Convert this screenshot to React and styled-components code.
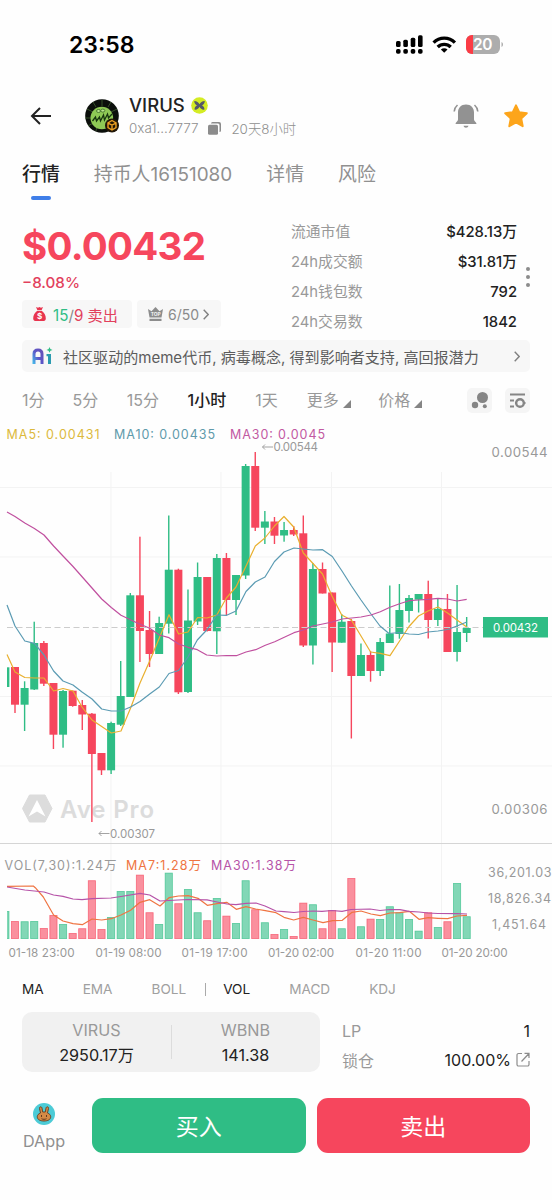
import React, { useState } from 'react';
import styled, { createGlobalStyle } from 'styled-components';

const GREEN = '#2fbd85';
const RED = '#f6465d';
const FONT = 'Inter, "Noto Sans CJK SC", sans-serif';

const GlobalStyle = createGlobalStyle`
  * {
    box-sizing: border-box;
  }
  body {
    margin: 0;
    background: #fefefe;
    font-family: ${FONT};
    color: #222;
  }
  button {
    font-family: inherit;
    border: none;
    background: none;
    padding: 0;
  }
  svg {
    flex: none;
  }
`;

const Screen = styled.div`
  width: 552px;
  height: 1200px;
  overflow: hidden;
  display: flex;
  flex-direction: column;
  white-space: nowrap;
`;

const StatusBar = styled.div`
  display: flex;
  align-items: center;
  height: 90px;
  padding: 0 49px 0 69px;
`;

const Clock = styled.span`
  flex: 1;
  font-size: 23px;
  font-weight: 600;
  color: #000;
`;

const Header = styled.header`
  display: flex;
  align-items: center;
  height: 51px;
  padding: 0 23px 0 30px;
`;

const TokenInfo = styled.div`
  flex: 1;
  margin-left: 9px;
  padding-top: 2px;
`;

const TokenName = styled.div`
  display: flex;
  align-items: center;
  gap: 6px;
  height: 23px;
  font-size: 18.5px;
  font-weight: 500;
`;

const TokenMeta = styled.div`
  display: flex;
  align-items: center;
  height: 23px;
  font-size: 13.4px;
  font-weight: 300;
  color: #8f8f8f;
  svg {
    margin: 0 10px;
  }
`;

const Tabs = styled.nav`
  display: flex;
  height: 67px;
  padding: 20px 22px 0;
`;

const Tab = styled.button`
  display: flex;
  flex-direction: column;
  align-items: center;
  height: 42px;
  margin-right: 34px;
  font-size: 18.9px;
  line-height: 28px;
  font-weight: ${props => (props.$active ? 500 : 400)};
  color: ${props => (props.$active ? '#222' : '#909090')};
  &::after {
    content: '';
    width: 20px;
    height: 4px;
    margin-top: 7px;
    border-radius: 2px;
    background: ${props => (props.$active ? '#3f7ee8' : 'transparent')};
  }
`;

const Overview = styled.section`
  display: flex;
  justify-content: space-between;
  height: 132px;
  padding: 8px 22px 0 22px;
`;

const Price = styled.div`
  height: 60px;
  line-height: 60px;
  font-size: 38.5px;
  font-weight: 700;
  letter-spacing: -0.7px;
  color: ${RED};
`;

const Change = styled.div`
  height: 13px;
  line-height: 13px;
  font-size: 15.2px;
  font-weight: 500;
  color: #e2405c;
`;

const Pills = styled.div`
  display: flex;
  gap: 5px;
  margin-top: 11px;
`;

const Pill = styled.div`
  display: flex;
  align-items: center;
  height: 28px;
  width: ${props => props.$width}px;
  padding-left: 11px;
  border-radius: 4px;
  background: #f7f7f7;
  font-size: ${props => props.$size}px;
  color: #8a8a8a;
  svg:first-child {
    margin-right: ${props => props.$gap}px;
  }
`;

const Up = styled.span`
  color: ${GREEN};
`;

const Down = styled.span`
  color: #e2405c;
`;

const StatsWrap = styled.div`
  display: flex;
  align-items: center;
`;

const Stats = styled.div`
  width: 226px;
  margin-top: -2px;
`;

const Stat = styled.div`
  display: flex;
  justify-content: space-between;
  height: 30.2px;
  line-height: 30px;
  font-size: 14.8px;
  color: #999;
  b {
    font-weight: 500;
    color: #222;
  }
`;

const Dots = styled.div`
  display: flex;
  flex-direction: column;
  gap: 4px;
  margin: -2px 0 0 9px;
  i {
    width: 4px;
    height: 4px;
    border-radius: 2px;
    background: #8c8c8c;
  }
`;

const AiBar = styled.div`
  display: flex;
  align-items: center;
  height: 32px;
  margin: 0 22px;
  padding: 0 10px;
  border-radius: 5px;
  background: #f7f7f7;
  font-size: 15.05px;
  color: #5c5c5c;
  p {
    flex: 1;
    margin: 0 0 0 10px;
  }
`;

const Intervals = styled.div`
  display: flex;
  align-items: center;
  height: 56px;
  padding: 0 22px;
`;

const Interval = styled.button`
  display: flex;
  align-items: center;
  margin-top: -2px;
  margin-right: ${props => props.$gap}px;
  font-size: 16px;
  font-weight: ${props => (props.$active ? 500 : 400)};
  color: ${props => (props.$active ? '#222' : '#999')};
  svg {
    margin: 9px 0 0 4px;
  }
`;

const Tools = styled.div`
  display: flex;
  gap: 13px;
  margin-left: auto;
`;

const ToolButton = styled.button`
  display: flex;
  width: 25px;
  height: 25px;
  border-radius: 5px;
  background: #f5f5f5;
`;

const Chart = styled.svg`
  display: block;
  flex: none;
  font-family: ${FONT};
`;

const Indicators = styled.div`
  display: flex;
  align-items: center;
  height: 48px;
  padding: 2px 22px 0;
`;

const Indicator = styled.button`
  margin-right: ${props => props.$gap}px;
  font-size: 13.6px;
  font-weight: 400;
  color: ${props => (props.$active ? '#222' : '#a0a0a0')};
`;

const Bar = styled.i`
  width: 1px;
  height: 13px;
  margin-right: 17px;
  background: #aaa;
`;

const Pool = styled.section`
  display: flex;
  height: 60px;
  padding: 0 22px;
`;

const Reserves = styled.div`
  display: flex;
  align-items: center;
  width: 298px;
  border-radius: 10px;
  background: #f1f1f1;
`;

const Reserve = styled.div`
  flex: 1;
  padding-top: 1px;
  text-align: center;
  font-size: 16.2px;
  line-height: 25px;
  color: #999;
  b {
    display: block;
    font-weight: 400;
    color: #222;
  }
  & + & {
    background: linear-gradient(#dcdcdc, #dcdcdc) no-repeat left center / 1px 34px;
  }
`;

const Locks = styled.div`
  flex: 1;
  padding: 5px 0 0 22px;
`;

const Lock = styled.div`
  display: flex;
  align-items: center;
  height: 28.5px;
  font-size: 16px;
  color: #999;
  b {
    flex: 1;
    text-align: right;
    font-weight: 400;
    color: #222;
  }
  svg {
    margin-left: 5px;
  }
`;

const Actions = styled.footer`
  display: flex;
  height: 55px;
  margin-top: 26px;
  padding: 0 22px;
`;

const DApp = styled.div`
  display: flex;
  flex-direction: column;
  align-items: center;
  width: 44px;
  margin-right: 26px;
  padding-top: 5px;
  font-size: 16.2px;
  line-height: 32px;
  color: #8f8f8f;
`;

const TradeButton = styled.button`
  flex: 1;
  margin-left: ${props => props.$gap || 0}px;
  padding-bottom: 2px;
  border-radius: 11px;
  background: ${props => props.$color};
  color: #fff;
  font-size: 23px;
  font-weight: 400;
`;

// [high, top, bottom, low, rising, volume top]
const candles = [
  [667, 667.3, 687, 687, 1, 911],
  [667, 667, 704.7, 713, 0, 921],
  [681.3, 688, 704.7, 731, 1, 921.3],
  [621.7, 643, 689.5, 690, 1, 921],
  [641, 643, 683.7, 686, 0, 928],
  [683, 683, 734.7, 749, 0, 915],
  [690, 691, 734.7, 747.7, 1, 924],
  [690.7, 690.7, 706, 706.7, 0, 933],
  [700, 705, 714.5, 730, 0, 928.3],
  [713, 713.7, 754, 822, 0, 880.3],
  [753, 753, 770.3, 775, 0, 929],
  [721.7, 723, 770.3, 774, 1, 917],
  [661, 696, 724.7, 726, 1, 891],
  [593, 595.3, 697, 697, 1, 891],
  [536.7, 595.3, 631, 662, 0, 874.7],
  [611, 630, 654, 667, 0, 912.3],
  [616.7, 623, 654, 654, 1, 924],
  [515.5, 569.7, 623.7, 633.5, 1, 872.7],
  [568.7, 569.7, 692.3, 694, 0, 903.3],
  [589.5, 620.5, 692, 693, 1, 889],
  [562.5, 577, 621.5, 625, 1, 912.3],
  [577, 577, 631, 631.5, 0, 920.3],
  [554, 558, 631.3, 654, 1, 898],
  [553, 558, 600, 615, 0, 915.7],
  [575, 575, 600, 615, 1, 923],
  [464, 466, 575.5, 579, 1, 880.3],
  [452, 466, 527.7, 531, 0, 909.3],
  [511, 521.5, 527.7, 544, 1, 922.3],
  [517, 521.5, 535.7, 544, 0, 934],
  [522, 530, 535.5, 541.7, 1, 929],
  [526, 530, 534.5, 536, 0, 936],
  [515.5, 533.3, 645.5, 647, 0, 902.7],
  [563, 569, 645.5, 664.5, 1, 904.3],
  [562.5, 569, 593.5, 593.5, 0, 928.3],
  [592.5, 592.5, 642.5, 672, 0, 910],
  [614, 621.7, 642.7, 642.7, 1, 928.3],
  [619, 621, 676, 738.5, 0, 878],
  [643.5, 655, 676, 676, 1, 926.3],
  [651, 655, 671, 681.7, 0, 918.7],
  [638, 642, 671, 676, 1, 919],
  [585.5, 633.5, 643, 643, 1, 906.3],
  [584, 610, 634, 638.7, 1, 912.3],
  [595, 598, 611, 622.5, 1, 919],
  [594, 594, 599.7, 612.5, 1, 930.7],
  [580.7, 594, 620, 638.5, 0, 912.3],
  [599, 609, 620, 626, 1, 927],
  [594, 609, 652, 652, 0, 921.3],
  [585, 632, 652, 661.5, 1, 883],
  [617, 628, 633, 642, 1, 916.3],
];

const lines = {
  ma5: '7,654.5 15,672 24.8,677.5 34.4,678 44,678 53.6,691 63,688.5 73,691 82,707 92,720 101.7,726.5 111.3,733 121,731 130.6,708 140,683 149.7,661 159.3,638 169,614.7 178.6,634 188,632 197.6,617.5 207,618 216.8,615 226.4,598 236,587 245.6,567 255.3,546 264.9,538 274.5,526 284,516.5 293.7,527 303.3,553 313,563.5 322.5,574 332,596 341.7,615 351.4,620 361,636 370.6,652 380.3,653.3 390,655.7 399.6,641 409,626.5 418.5,616 428,611 438,607 447.6,613 457,620 466.7,627',
  ma10: '7,605 15,626 24.8,641 34.4,643.3 44,655 53.6,671 63,681 73,685 82,692 92,699 101.7,709 111.3,711 121,711 130.6,707 140,701.5 149.7,694 159.3,687 169,673.5 178.6,670.5 188,657 197.3,640 206.7,630 216.7,615 226.7,615.3 236,611 246,591.5 255.3,582 265,577 274.5,561.5 284,552 294,548 303,549 313,550 322.6,549.7 332.3,556.5 342,571 351.5,586 361,600 371,614 380,626 389,633.5 399.6,632.5 409,634 418.5,634.5 428,632 438,631 447.5,629.5 457,626 466.7,622',
  ma30: '7,512 15,516.5 24.8,523 34.4,528.5 44,535 53.6,546 63,556 73,566.5 82.3,577 92,588 101.7,599 111.3,607.5 121,615.3 136.7,622.7 149.7,628.3 159.3,635 169,637.7 178.6,644 188,647.3 197.3,649.7 206.7,655 216.7,656 226.7,655.5 236.3,655.7 246,652 255.7,649.7 265.3,645.3 274.7,641.7 284.3,637.3 294,632.7 303.3,630 313,626 322.7,624 332.3,622 342,619 351.7,618 361,617 371,615 380.3,611.7 390,607.3 399.6,603.7 409,600.7 418.7,600 428,599.3 438,598.3 447.6,599 457,601 466.7,599.3',
  vol7: '7,886.3 33.3,886 35.3,887.7 43.3,897 53.6,915 63,921 73,923.7 82.3,924.7 92,919 101.7,920 111.3,918.7 121,915 130.6,910.3 140,902.3 149.7,899.7 160,906 169,897.7 178.6,896 188.3,895.7 198,898.3 207.3,905.3 217,903.7 226.7,902.3 236.3,909.3 246,906.7 255.7,909 265.3,910.7 276,912.7 284,917.3 293.7,920 303.3,917.3 313,920 323,922.7 332.7,920.7 342.3,920.3 352,912.3 361,911 371,914 380.3,915.7 390,913 399.7,912.7 409.3,911.3 419,919.3 428.3,917.7 438,918.3 447.7,918.7 457,916 467,915.3',
  vol30: '7,887 24.8,890 44,892 53.6,895 63,896.3 73,899 82,899.7 92,898.7 111,898 121,896.5 140,893.3 149.7,895 160,901 178,900 188,899.5 207,899.8 217,902 227,904 236,904.7 246,903.3 256,903 265,906 276,911 284,911.7 294,912.5 303,911.5 313,911 322,911.3 332,910.5 342,911.3 351,909.5 370,909 380,910.5 390,909.5 400,909.7 409,911.3 419,912 428,913 438,913.5 457,913.7 467,914',
};

const times = [
  [8.5, '01-18 23:00'],
  [95.5, '01-19 08:00'],
  [181.5, '01-19 17:00'],
  [268, '01-20 02:00'],
  [355.5, '01-20 11:00'],
  [441.5, '01-20 20:00'],
];

const Label = ({ x, y, w, size = 12.5, color = '#999', children }) => (
  <text x={x} y={y} textLength={w} fontSize={size} fill={color}>
    {children}
  </text>
);

const Kline = () => (
  <Chart width="552" height="536" viewBox="0 428 552 536">
    <defs>
      <clipPath id="plot">
        <rect x="7" y="428" width="540" height="520" />
      </clipPath>
    </defs>
    {[487.5, 557, 696.5, 766].map(y => (
      <path key={y} d={`M0 ${y}H552`} stroke="#f3f3f3" />
    ))}
    {[111, 221, 331.5, 441.5].map(x => (
      <path key={x} d={`M${x} 472V939`} stroke="#f3f3f3" />
    ))}
    <path d="M0 843.5H552" stroke="#d5d5d5" />
    <g fill="#dcdcdc">
      <path d="M29.5 795h15.5l7 13.500-7 13.500H29.5l-7-13.500z" stroke="#dcdcdc" strokeLinejoin="round" />
      <path d="M37 800l8.5 16.5-8.5-5-8.5 5z" fill="#fff" />
      <text x="60" y="817.5" fontSize="24" fontWeight="600" textLength="94">Ave Pro</text>
    </g>
    <g clipPath="url(#plot)">
      {candles.map(([high, top, bottom, low, rising, vol], i) => {
        const x = 15 + (i - 1) * 9.61;
        const color = rising ? GREEN : RED;
        return (
          <g key={i} fill={color}>
            <rect x={x - 4} y={top} width="8" height={bottom - top} />
            <rect x={x - 0.7} y={high} width="1.4" height={low - high} />
            <rect x={x - 3.6} y={vol + 0.4} width="7.2" height={938.2 - vol} fillOpacity="0.6" stroke={color} strokeOpacity="0.7" strokeWidth="0.8" />
          </g>
        );
      })}
    </g>
    <path d="M7 627.5H483" stroke="#ccc" strokeWidth="1.2" strokeDasharray="6 3.5" />
    <g fill="none" strokeWidth="1.2" strokeLinejoin="round">
      <polyline points={lines.ma5} stroke="#e9b02f" />
      <polyline points={lines.ma10} stroke="#5b9bb3" />
      <polyline points={lines.ma30} stroke="#c0509f" />
      <polyline points={lines.vol7} stroke="#ef7442" />
      <polyline points={lines.vol30} stroke="#b653a8" />
    </g>
    <Label x={6.5} y={439} w={93} color="#dcb93c">MA5: 0.00431</Label>
    <Label x={114} y={439} w={101} color="#5f9aab">MA10: 0.00435</Label>
    <Label x={230} y={439} w={95} color="#c259a2">MA30: 0.0045</Label>
    <Label x={273.5} y={451} w={44.500} size={11.5}>0.00544</Label>
    <Label x={110} y={837.5} w={45} size={11.5}>0.00307</Label>
    <path d="M273 447H262.500M265 444.500l-2.500 2.500 2.500 2.500M109.500 833.500H99M101.500 831l-2.500 2.500 2.500 2.500" fill="none" stroke="#999" strokeWidth="0.9" />
    <Label x={491.5} y={457} w={56} size={13.2}>0.00544</Label>
    <Label x={491.5} y={813.5} w={56} size={13.2}>0.00306</Label>
    <rect x="483" y="617" width="65" height="20.500" fill={GREEN} />
    <Label x={493} y={631.5} w={45} size={11.5} color="#fff">0.00432</Label>
    <Label x={4.500} y={870} w={112}>VOL(7,30):1.24万</Label>
    <Label x={126} y={870} w={75} color="#ef7442">MA7:1.28万</Label>
    <Label x={211} y={870} w={85} color="#b653a8">MA30:1.38万</Label>
    <Label x={488} y={877} w={63.500}>36,201.03</Label>
    <Label x={488} y={903} w={63}>18,826.34</Label>
    <Label x={492} y={929} w={54}>1,451.64</Label>
    {times.map(([x, text]) => (
      <Label key={text} x={x} y={956.5} w={66} size={11.7}>{text}</Label>
    ))}
  </Chart>
);

const StatusIcons = () => (
  <svg width="108" height="22" viewBox="395 34 108 22">
    {[[396, 41], [403.3, 39.7], [410.7, 37.700], [418, 35.200]].map(([x, y]) => (
      <g key={x}>
        <rect x={x} y={y} width="4.600" height={47 - y} rx="1.500" />
        <rect x={x} y="49" width="4.600" height="4.800" rx="1.700" />
      </g>
    ))}
    <g fill="none" stroke="#000" strokeWidth="3.300">
      <path d="M433.600 42.600a15 15 0 0 1 21.300 0" />
      <path d="M437.700 47a9.200 9.200 0 0 1 13 0" />
    </g>
    <path d="M444.200 52.800l-3.300-3.300a4.700 4.700 0 0 1 6.600 0z" />
    <rect x="466" y="35" width="34" height="19" rx="6" fill="#adadad" />
    <path d="M473 35v19h-1a6 6 0 0 1-6-6v-7a6 6 0 0 1 6-6z" fill="#fb3c45" />
    <path d="M501.500 42v5c2-.8 2-4.200 0-5z" fill="#adadad" />
    <text x="473" y="50" fontSize="15.500" fontWeight="600" fill="#fff" textLength="19.500">20</text>
  </svg>
);

const BackIcon = () => (
  <svg width="22" height="18" viewBox="0 0 22 18" fill="none" stroke="#222" strokeWidth="2">
    <path d="M21 9H2M10 1L2 9l8 8" />
  </svg>
);

const Avatar = () => (
  <svg width="36" height="36" viewBox="0 0 36 36" style={{ marginLeft: 32 }}>
    <circle cx="18" cy="18" r="16.800" fill="#0b0f0b" />
    <path d="M18 2v6M9 4l3 5M27 4l-3 5M3 11l6 3M33 11l-6 3M1 20h6M4 28l5-3M12 33l1-5" stroke="#3f6030" strokeWidth="0.800" />
    <circle cx="17.800" cy="20" r="11.300" fill="#8ec955" />
    <path d="M8.500 23l3-4 1 4 3-4 1 4 3-6 1 5 3-6 1 4 3.500-4" fill="none" stroke="#17360f" strokeWidth="1.300" />
    <g fill="#b9e68c" stroke="#2d5a1c" strokeWidth="0.700">
      <ellipse cx="14.500" cy="13" rx="2" ry="1.500" />
      <ellipse cx="18.800" cy="12.600" rx="2" ry="1.500" />
    </g>
    <circle cx="28" cy="27.500" r="7" fill="#211606" />
    <path d="M28 22.500l4 2.300v4.900l-4 2.300-4-2.300v-4.900zM24 25l4 2.200 4-2.200M28 27.200V31.500" fill="none" stroke="#eb9f22" strokeWidth="1.400" />
  </svg>
);

const NameBadge = () => (
  <svg width="17" height="17" viewBox="0 0 17 17">
    <circle cx="8.500" cy="8.500" r="8.300" fill="#d4ec24" />
    <path d="M3.200 4c2.800 0 4.300 1.500 5.300 3.200 1-1.700 2.500-3.200 5.300-3.200 0 2.200-1.300 3.500-2.800 4.500 1.800 1 2.800 2.300 2.300 4.300-2.600.2-3.800-1.300-4.800-3-1 1.700-2.200 3.200-4.800 3-.5-2 .5-3.300 2.300-4.300C4.500 7.500 3.200 6.200 3.200 4z" fill="#54586a" />
  </svg>
);

const CopyIcon = () => (
  <svg width="13" height="13" viewBox="0 0 13 13" fill="#8c8c8c">
    <path d="M3 1.500A1.500 1.500 0 0 1 4.500 0H11a2 2 0 0 1 2 2v6.500a1.500 1.500 0 0 1-1.500 1.500V3A1.500 1.500 0 0 0 10 1.500z" />
    <rect y="2.800" width="10" height="10" rx="1.500" />
  </svg>
);

const BellIcon = () => (
  <svg width="26" height="26" viewBox="0 0 26 26">
    <path d="M13 1.500c5 0 8 3.500 8 8v7c0 2 2.500 2.800 2.500 4.500h-21c0-1.700 2.500-2.500 2.500-4.500v-7c0-4.500 3-8 8-8zM10.500 22.800h5c-.5 2.600-4.500 2.600-5 0z" fill="#929292" />
    <path d="M4.500 2C2.700 3.500 1.500 5.500 1.200 8.500M21.500 2c1.800 1.500 3 3.500 3.300 6.500" fill="none" stroke="#929292" strokeWidth="1.600" />
  </svg>
);

const StarIcon = () => (
  <svg width="26" height="26" viewBox="0 0 26 26" style={{ marginLeft: 24 }}>
    <path d="M13 2.300l3.200 6.900 7.600 1-5.600 5.200 1.500 7.800-6.700-3.800-6.700 3.800 1.500-7.800-5.600-5.200 7.600-1z" fill="#fda51b" stroke="#fda51b" strokeWidth="2" strokeLinejoin="round" />
  </svg>
);

const BagIcon = () => (
  <svg width="13" height="14" viewBox="0 0 13 14">
    <path d="M3 0l2 .8L6.500 0 8 .8 10 0 8.700 3H4.300zM4.300 3.800h4.400C11 5.500 13 8.500 12.800 11.500c0 1.500-.8 2.500-2 2.500H2.200c-1.200 0-2-1-2-2.500C0 8.500 2 5.500 4.300 3.800z" fill="#e8354f" />
    <text x="4.100" y="12" fontSize="8" fontWeight="700" fill="#fff">$</text>
  </svg>
);

const CrownIcon = () => (
  <svg width="15" height="14" viewBox="0 0 15 14" fill="#8c8c8c">
    <path d="M0 2l3.500 2.200L7.500 0l4 4.200L15 2l-1.500 8.500h-12zM1.500 11.700h12V14h-12z" />
    <text x="2.800" y="8.800" fontSize="4.800" fontWeight="700" fill="#f7f7f7">TOP</text>
  </svg>
);

const Chevron = ({ width = 6, height = 11 }) => (
  <svg width={width} height={height} viewBox="0 0 6 11" fill="none" stroke="#808080" strokeWidth="1.400">
    <path d="M.7.700l4.500 4.800-4.500 4.800" />
  </svg>
);

const AiIcon = () => (
  <svg width="21" height="18" viewBox="0 0 21 18">
    <defs>
      <linearGradient id="ai" x1="0" y1="1" x2="1" y2="0">
        <stop offset="0" stopColor="#45b4e8" />
        <stop offset="0.5" stopColor="#5b55c8" />
        <stop offset="1" stopColor="#6550b8" />
      </linearGradient>
    </defs>
    <path d="M2 17V7c0-2.500 1.500-4 4-4s4 1.500 4 4v10M2 11.500h8" fill="none" stroke="url(#ai)" strokeWidth="3" />
    <path d="M14.500 7h4.500v10h-3V9.200h-1.500z" fill="#2b9bb0" />
    <path d="M17.500 0l.9 2 2.100.9-2.100.9-.9 2-.9-2-2.100-.9 2.100-.9z" fill="#2fbd85" />
  </svg>
);

const Corner = () => (
  <svg width="8" height="8" viewBox="0 0 8 8">
    <path d="M8 0v8H0z" fill="#858585" />
  </svg>
);

const LinkIcon = () => (
  <svg width="14" height="15" viewBox="0 0 14 15" fill="none" stroke="#8c8c8c" strokeWidth="1.200">
    <path d="M6 1.500H2.500a1.500 1.500 0 0 0-1.500 1.500v9.500A1.500 1.500 0 0 0 2.500 14h9a1.500 1.500 0 0 0 1.500-1.500V9M5.500 9.500L13 1.500M8.500 1.300H13V6" />
  </svg>
);

const CakeIcon = () => (
  <svg width="22" height="22" viewBox="0 0 22 22">
    <circle cx="11" cy="11" r="11" fill="#4ccbd6" />
    <path d="M7.500 10L6.500 5.500c-.3-2 2.200-2.300 2.500-.4L9.700 9h2.600l.7-3.900c.3-1.900 2.800-1.600 2.500.4L14.500 10c2 .8 3.200 2 3.200 3.700 0 3-3 4.300-6.700 4.300s-6.700-1.300-6.700-4.300c0-1.700 1.200-2.900 3.200-3.700z" fill="#d48a45" stroke="#633a20" strokeWidth="0.900" />
    <path d="M8.500 12v2M13.500 12v2M8.500 15.700c1 .8 4 .8 5 0" stroke="#633a20" fill="none" />
  </svg>
);

const tabs = ['行情', '持币人16151080', '详情', '风险'];

const stats = [
  ['流通市值', '$428.13万'],
  ['24h成交额', '$31.81万'],
  ['24h钱包数', '792'],
  ['24h交易数', '1842'],
];

const intervals = [
  ['1分', 28],
  ['5分', 28.5],
  ['15分', 28.5],
  ['1小时', 29],
  ['1天', 29],
  ['更多', 27.5, true],
  ['价格', 0, true],
];

export default function App() {
  const [tab, setTab] = useState('行情');
  const [interval, setInterval] = useState('1小时');

  return (
    <Screen>
      <GlobalStyle />
      <StatusBar>
        <Clock>23:58</Clock>
        <StatusIcons />
      </StatusBar>
      <Header>
        <BackIcon />
        <Avatar />
        <TokenInfo>
          <TokenName>VIRUS <NameBadge /></TokenName>
          <TokenMeta>0xa1...7777 <CopyIcon /> 20天8小时</TokenMeta>
        </TokenInfo>
        <BellIcon />
        <StarIcon />
      </Header>
      <Tabs>
        {tabs.map(name => (
          <Tab key={name} $active={name === tab} onClick={() => setTab(name)}>{name}</Tab>
        ))}
      </Tabs>
      <Overview>
        <div>
          <Price>$0.00432</Price>
          <Change>−8.08%</Change>
          <Pills>
            <Pill $width={110} $size={15.2} $gap={7}>
              <BagIcon />
              <span><Up>15</Up>/<Down>9 卖出</Down></span>
            </Pill>
            <Pill $width={84} $size={14} $gap={5}>
              <CrownIcon />
              <span>6/50&nbsp;</span>
              <Chevron />
            </Pill>
          </Pills>
        </div>
        <StatsWrap>
          <Stats>
            {stats.map(([name, value]) => (
              <Stat key={name}>{name}<b>{value}</b></Stat>
            ))}
          </Stats>
          <Dots><i /><i /><i /></Dots>
        </StatsWrap>
      </Overview>
      <AiBar>
        <AiIcon />
        <p>社区驱动的meme代币, 病毒概念, 得到影响者支持, 高回报潜力</p>
        <Chevron />
      </AiBar>
      <Intervals>
        {intervals.map(([name, gap, menu]) => (
          <Interval key={name} $gap={gap} $active={name === interval} onClick={() => setInterval(name)}>
            {name}
            {menu && <Corner />}
          </Interval>
        ))}
        <Tools>
          <ToolButton>
            <svg width="25" height="25" viewBox="0 0 25 25" fill="#858585">
              <circle cx="15.500" cy="9.500" r="5.500" />
              <circle cx="8" cy="17" r="3.200" />
              <circle cx="17.800" cy="18.200" r="2" />
            </svg>
          </ToolButton>
          <ToolButton>
            <svg width="25" height="25" viewBox="0 0 25 25" fill="none" stroke="#858585" strokeWidth="1.800">
              <path d="M5 6.500h15M5 12.500h4M5 18.500h4" />
              <circle cx="15" cy="15" r="3.800" strokeWidth="2.400" />
              <path d="M10 15h1M19 15h1.500" />
            </svg>
          </ToolButton>
        </Tools>
      </Intervals>
      <Kline />
      <Indicators>
        <Indicator $active $gap={39}>MA</Indicator>
        <Indicator $gap={39}>EMA</Indicator>
        <Indicator $gap={19}>BOLL</Indicator>
        <Bar />
        <Indicator $active $gap={39}>VOL</Indicator>
        <Indicator $gap={39}>MACD</Indicator>
        <Indicator>KDJ</Indicator>
      </Indicators>
      <Pool>
        <Reserves>
          <Reserve>VIRUS<b>2950.17万</b></Reserve>
          <Reserve>WBNB<b>141.38</b></Reserve>
        </Reserves>
        <Locks>
          <Lock>LP<b>1</b></Lock>
          <Lock>锁仓<b>100.00%</b><LinkIcon /></Lock>
        </Locks>
      </Pool>
      <Actions>
        <DApp><CakeIcon />DApp</DApp>
        <TradeButton $color={GREEN}>买入</TradeButton>
        <TradeButton $color={RED} $gap={11}>卖出</TradeButton>
      </Actions>
    </Screen>
  );
}
